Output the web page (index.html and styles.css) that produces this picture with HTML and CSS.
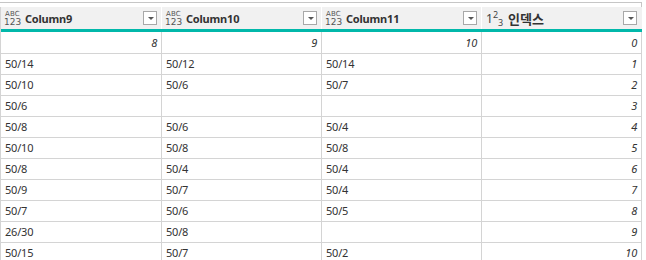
FILE: index.html
```html
<!DOCTYPE html>
<html>
<head>
<meta charset="utf-8">
<link rel="stylesheet" href="styles.css">
</head>
<body>
<div class="frame"></div>
<div class="grid">
  <div class="hcell">
    <span class="tabc"><span class="t1">ABC</span><span class="t2">123</span></span>
    <span class="hlabel">Column9</span>
    <span class="dd"></span>
  </div>
  <div class="hcell">
    <span class="tabc"><span class="t1">ABC</span><span class="t2">123</span></span>
    <span class="hlabel">Column10</span>
    <span class="dd"></span>
  </div>
  <div class="hcell">
    <span class="tabc"><span class="t1">ABC</span><span class="t2">123</span></span>
    <span class="hlabel">Column11</span>
    <span class="dd"></span>
  </div>
  <div class="hcell">
    <span class="tnum">1<sup>2</sup><sub>3</sub></span>
    <span class="hlabel ko">인덱스</span>
    <span class="dd"></span>
  </div>

  <div class="bar"></div>

  <div class="c num first">8</div><div class="c num first">9</div><div class="c num first">10</div><div class="c num first">0</div>
  <div class="c">50/14</div><div class="c">50/12</div><div class="c">50/14</div><div class="c num">1</div>
  <div class="c">50/10</div><div class="c">50/6</div><div class="c">50/7</div><div class="c num">2</div>
  <div class="c">50/6</div><div class="c"></div><div class="c"></div><div class="c num">3</div>
  <div class="c">50/8</div><div class="c">50/6</div><div class="c">50/4</div><div class="c num">4</div>
  <div class="c">50/10</div><div class="c">50/8</div><div class="c">50/8</div><div class="c num">5</div>
  <div class="c">50/8</div><div class="c">50/4</div><div class="c">50/4</div><div class="c num">6</div>
  <div class="c">50/9</div><div class="c">50/7</div><div class="c">50/4</div><div class="c num">7</div>
  <div class="c">50/7</div><div class="c">50/6</div><div class="c">50/5</div><div class="c num">8</div>
  <div class="c">26/30</div><div class="c">50/8</div><div class="c"></div><div class="c num">9</div>
  <div class="c">50/15</div><div class="c">50/7</div><div class="c">50/2</div><div class="c num">10</div>
</div>
</body>
</html>
```

FILE: styles.css
```css
html, body {
  margin: 0;
  padding: 0;
  background: #ffffff;
}
body {
  font-family: "Noto Sans", "Noto Sans CJK KR", sans-serif;
  color: #333333;
  width: 646px;
  height: 260px;
  overflow: hidden;
}
.frame {
  margin-top: 2px;
  width: 642px;
  height: 5px;
  border-top: 1px solid #c6c6c6;
  border-right: 1px solid #c6c6c6;
  box-sizing: border-box;
}
.grid {
  display: grid;
  grid-template-columns: 161px 160px 160px 160px;
  width: 642px;
  border-left: 1px solid #d4d4d4;
  box-sizing: border-box;
}
.hcell {
  height: 22px;
  background: #f1f1f1;
  border-right: 1px solid #ffffff;
  display: flex;
  align-items: center;
  padding-left: 3px;
  box-sizing: border-box;
}
.hcell:nth-child(4) {
  border-right: 1px solid #f1f1f1;
}
.tabc {
  display: flex;
  flex-direction: column;
  width: 19px;
  color: #555555;
  font-family: "DejaVu Sans", sans-serif;
  line-height: 1;
  margin-top: 1px;
}
.t1 {
  font-size: 7px;
  letter-spacing: 0.2px;
  padding-left: 1px;
}
.t2 {
  font-size: 9px;
}
.tnum {
  width: 22px;
  color: #444444;
  font-family: "Noto Sans", sans-serif;
  font-size: 12px;
  line-height: 1;
  padding-left: 1px;
}
.tnum sup {
  font-size: 9px;
  vertical-align: 5px;
}
.tnum sub {
  font-size: 9px;
  vertical-align: -3px;
}
.hlabel {
  flex: 1;
  font-size: 11px;
  font-weight: bold;
  letter-spacing: -0.2px;
  color: #333333;
  padding-left: 2px;
}
.hlabel.ko {
  font-size: 13px;
  letter-spacing: 0;
  padding-left: 0;
}
.dd {
  width: 14px;
  height: 14px;
  border: 1px solid #a8a8a8;
  background: #ffffff;
  box-sizing: border-box;
  margin-right: 4px;
  position: relative;
}
.dd::after {
  content: "";
  position: absolute;
  left: 4px;
  top: 5px;
  border-left: 3px solid transparent;
  border-right: 3px solid transparent;
  border-top: 3px solid #555555;
}
.bar {
  grid-column: 1 / 5;
  height: 3px;
  background: #01b8aa;
}
.c {
  height: 21px;
  border-right: 1px solid #d4d4d4;
  border-bottom: 1px solid #d4d4d4;
  box-sizing: border-box;
  font-size: 11px;
  letter-spacing: -0.2px;
  line-height: 20px;
  padding: 0 4px 0 4px;
  white-space: nowrap;
}
.c.first {
  height: 22px;
  line-height: 21px;
}
.c.num {
  text-align: right;
  font-style: italic;
}
```
